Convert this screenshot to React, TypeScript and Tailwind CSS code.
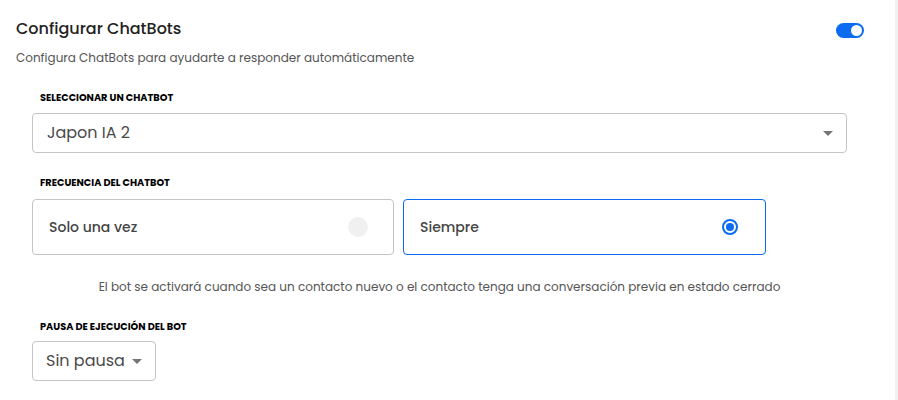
import { useState } from 'react';

const font = { fontFamily: 'Poppins, "DejaVu Sans", sans-serif' };

function Caret() {
    return (
        <svg width="10" height="5" viewBox="0 0 10 5" className="shrink-0">
            <path d="M0 0h10L5 5z" fill="#757575" />
        </svg>
    );
}

export default function App() {
    const [enabled, setEnabled] = useState(true);
    const [freq, setFreq] = useState<'once' | 'always'>('always');

    return (
        <div className="flex w-[898px] h-[400px] bg-white overflow-hidden" style={font}>
            <div className="flex-1 flex flex-col">
                {/* Header */}
                <div className="flex items-center justify-between pl-4 pr-[31px] pt-[18px]">
                    <h1 className="text-[16px] leading-[22px] font-medium text-[#222]">Configurar ChatBots</h1>
                    <button
                        onClick={() => setEnabled(!enabled)}
                        className={`w-7 h-[15px] rounded-full flex items-center px-[2px] mt-[2px] ${enabled ? 'bg-[#0b6bf1] justify-end' : 'bg-gray-300 justify-start'}`}
                    >
                        <span className="w-[11px] h-[11px] rounded-full bg-white" />
                    </button>
                </div>
                <p className="pl-4 mt-[9px] text-[12px] leading-[18px] text-[#555]">
                    Configura ChatBots para ayudarte a responder automáticamente
                </p>

                <div className="pl-8 pr-[48px] mt-[24px] flex flex-col">
                    <label className="pl-2 text-[9.75px] leading-[14px] font-bold text-black">SELECCIONAR UN CHATBOT</label>
                    <div className="mt-[8px] h-10 border border-[#c4c4c4] rounded flex items-center justify-between pl-[14px] pr-[13px]">
                        <span className="text-[16px] text-[#4a4a4a]">Japon IA 2</span>
                        <Caret />
                    </div>

                    <label className="pl-2 mt-[23px] text-[9.75px] leading-[14px] font-bold text-black">FRECUENCIA DEL CHATBOT</label>
                    <div className="mt-[9px] flex gap-[9px]">
                        <button
                            onClick={() => setFreq('once')}
                            className={`w-[362px] h-[56px] rounded border flex items-center justify-between pl-4 pr-[25px] ${freq === 'once' ? 'border-[#0b6bf1]' : 'border-[#c4c4c4]'}`}
                        >
                            <span className="text-[14px] font-medium text-[#444]">Solo una vez</span>
                            {freq === 'once' ? (
                                <span className="w-4 h-4 rounded-full border-2 border-[#0b6bf1] flex items-center justify-center">
                                    <span className="w-2 h-2 rounded-full bg-[#0b6bf1]" />
                                </span>
                            ) : (
                                <span className="w-5 h-5 rounded-full bg-[#f0f0f0]" />
                            )}
                        </button>
                        <button
                            onClick={() => setFreq('always')}
                            className={`w-[363px] h-[56px] rounded border flex items-center justify-between pl-4 pr-[27px] ${freq === 'always' ? 'border-[#0b6bf1]' : 'border-[#c4c4c4]'}`}
                        >
                            <span className="text-[14px] font-medium text-[#444]">Siempre</span>
                            {freq === 'always' ? (
                                <span className="w-4 h-4 rounded-full border-2 border-[#0b6bf1] flex items-center justify-center">
                                    <span className="w-2 h-2 rounded-full bg-[#0b6bf1]" />
                                </span>
                            ) : (
                                <span className="w-5 h-5 rounded-full bg-[#f0f0f0]" />
                            )}
                        </button>
                    </div>

                    <p className="mt-[23px] text-center text-[12px] leading-[18px] text-[#555]">
                        El bot se activará cuando sea un contacto nuevo o el contacto tenga una conversación previa en estado cerrado
                    </p>

                    <label className="pl-2 mt-[24px] text-[9.75px] leading-[14px] font-bold text-black">PAUSA DE EJECUCIÓN DEL BOT</label>
                    <div className="mt-[7px] self-start h-10 border border-[#c4c4c4] rounded flex items-center gap-[7px] pl-[13px] pr-[13px]">
                        <span className="text-[16px] text-[#4a4a4a]">Sin pausa</span>
                        <Caret />
                    </div>
                </div>
            </div>
            <div className="w-[3px] bg-[#f1f1f1]" />
        </div>
    );
}
